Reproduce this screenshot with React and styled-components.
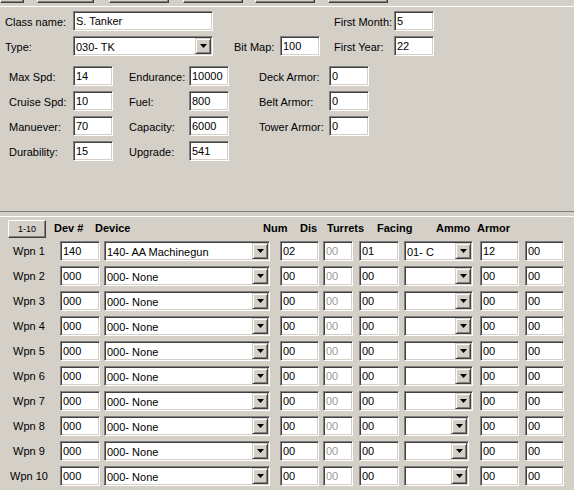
import React from 'react';
import styled, { createGlobalStyle } from 'styled-components';

const Global = createGlobalStyle`
  html, body { margin: 0; padding: 0; background: #d4d0c8; }
  body {
    font-family: "Liberation Sans", Arial, sans-serif;
    font-size: 11px;
    color: #000;
    overflow: hidden;
  }
`;

const Window = styled.div`
  width: 574px;
  height: 490px;
  background: #d4d0c8;
  overflow: hidden;
`;

/* bottoms of the tab buttons clipped at the top edge */
const TabStrip = styled.div`
  display: flex;
  height: 3px;
`;

const TabStub = styled.div`
  width: ${p => p.$w}px;
  margin-left: ${p => p.$ml}px;
  height: 3px;
  box-sizing: border-box;
  background: #d4d0c8;
  border-bottom: 1px solid #404040;
  border-right: 1px solid #404040;
  border-left: 1px solid #ffffff;
  box-shadow: inset 0 -1px 0 #808080, inset -1px 0 0 #808080;
`;

const EtchTop = styled.div`
  margin-top: 3px;
  height: 1px;
  background: #ffffff;
`;

const TopGrid = styled.div`
  display: grid;
  grid-template-columns: 68px 161px 46px 54px 60px 40px;
  grid-auto-rows: 20px;
  row-gap: 5px;
  padding-left: 5px;
  margin-top: 4px;
`;

const StatsGrid = styled.div`
  display: grid;
  grid-template-columns: 64px 56px 60px 70px 70px 40px;
  grid-auto-rows: 20px;
  row-gap: 5px;
  padding-left: 9px;
  margin-top: 10px;
`;

const Label = styled.div`
  display: flex;
  align-items: center;
  padding-top: 1px;
  white-space: nowrap;
  grid-column: ${p => p.$col || 'auto'};
`;

const Cell = styled.div`
  grid-column: ${p => p.$col || 'auto'};
`;

const Edit = styled.div`
  box-sizing: border-box;
  width: ${p => p.$w}px;
  height: 20px;
  background: #fff;
  border-top: 1px solid #808080;
  border-left: 1px solid #808080;
  border-bottom: 1px solid #ffffff;
  border-right: 1px solid #ffffff;
  box-shadow: inset 1px 1px 0 #404040, inset -1px -1px 0 #d4d0c8;
  padding: 2px 2px 0 2px;
  line-height: 14px;
  font-size: 11px;
  color: ${p => (p.$disabled ? '#999999' : '#000')};
  white-space: nowrap;
  overflow: hidden;
`;

const ComboBox = styled.div`
  box-sizing: border-box;
  width: ${p => p.$w}px;
  height: 20px;
  background: #fff;
  border-top: 1px solid #808080;
  border-left: 1px solid #808080;
  border-bottom: 1px solid #ffffff;
  border-right: 1px solid #ffffff;
  box-shadow: inset 1px 1px 0 #404040, inset -1px -1px 0 #d4d0c8;
  padding: 1px;
  display: flex;
  align-items: stretch;
`;

const ComboText = styled.div`
  flex: 1;
  padding: 2px 0 0 1px;
  line-height: 14px;
  font-size: 11px;
  white-space: nowrap;
  overflow: hidden;
`;

const DropButton = styled.div`
  box-sizing: border-box;
  width: 16px;
  height: 16px;
  background: #d4d0c8;
  border-top: 1px solid #d4d0c8;
  border-left: 1px solid #d4d0c8;
  border-bottom: 1px solid #404040;
  border-right: 1px solid #404040;
  box-shadow: inset 1px 1px 0 #ffffff, inset -1px -1px 0 #808080;
  display: flex;
  align-items: center;
  justify-content: center;
`;

const Arrow = () => (
  <svg width="7" height="4" viewBox="0 0 7 4">
    <path d="M0 0h7L3.5 4z" fill="#000" />
  </svg>
);

const Combo = ({ w, text }) => (
  <ComboBox $w={w}>
    <ComboText>{text}</ComboText>
    <DropButton>
      <Arrow />
    </DropButton>
  </ComboBox>
);

const DividerDark = styled.div`
  margin-top: 50px;
  height: 1px;
  background: #808080;
`;

const DividerLight = styled.div`
  margin-top: 4px;
  height: 1px;
  background: #ffffff;
`;

const HeaderRow = styled.div`
  display: grid;
  grid-template-columns: 46px 41px 168px 37px 27px 50px 59px 41px 60px;
  align-items: center;
  height: 18px;
  padding-left: 8px;
  margin-top: 3px;
`;

const Heading = styled.div`
  font-weight: bold;
  font-size: 11px;
  white-space: nowrap;
  padding-bottom: 2px;
`;

const SmallButton = styled.div`
  box-sizing: border-box;
  width: 38px;
  height: 18px;
  background: #d4d0c8;
  border-top: 1px solid #ffffff;
  border-left: 1px solid #ffffff;
  border-bottom: 1px solid #404040;
  border-right: 1px solid #404040;
  box-shadow: inset -1px -1px 0 #808080;
  display: flex;
  align-items: center;
  justify-content: center;
  font-size: 9px;
`;

const WeaponList = styled.div`
  display: grid;
  grid-auto-rows: 20px;
  row-gap: 5px;
  margin-top: 3px;
`;

const WeaponRow = styled.div`
  display: grid;
  grid-template-columns: 60px 44px 176px 43px 36px 45px 76px 45px 49px;
  height: 20px;
`;

const WpnLabel = styled.div`
  width: 58px;
  text-align: center;
  font-size: 11px;
  line-height: 20px;
`;

const weapons = [
  { dev: '140', device: '140- AA Machinegun', num: '02', tur: '01', facing: '01- C', ammo: '12', fw: 69 },
  ...Array.from({ length: 6 }, () => ({ dev: '000', device: '000- None', num: '00', tur: '00', facing: '', ammo: '00', fw: 69 })),
  ...Array.from({ length: 3 }, () => ({ dev: '000', device: '000- None', num: '00', tur: '00', facing: '', ammo: '00', fw: 65 })),
];

const tabs = [
  { w: 24, ml: 0 },
  { w: 57, ml: 13 },
  { w: 60, ml: 15 },
  { w: 60, ml: 14 },
  { w: 60, ml: 12 },
  { w: 60, ml: 13 },
];

export default function App() {
  return (
    <Window>
      <Global />
      <TabStrip>
        {tabs.map((t, i) => (
          <TabStub key={i} $w={t.w} $ml={t.ml} />
        ))}
      </TabStrip>
      <EtchTop />

      <TopGrid>
        <Label>Class name:</Label>
        <Cell><Edit $w={140}>S. Tanker</Edit></Cell>
        <Label $col="5">First Month:</Label>
        <Cell><Edit $w={40}>5</Edit></Cell>

        <Label>Type:</Label>
        <Cell><Combo w={140} text="030- TK" /></Cell>
        <Label>Bit Map:</Label>
        <Cell><Edit $w={40}>100</Edit></Cell>
        <Label>First Year:</Label>
        <Cell><Edit $w={40}>22</Edit></Cell>
      </TopGrid>

      <StatsGrid>
        <Label>Max Spd:</Label>
        <Cell><Edit $w={40}>14</Edit></Cell>
        <Label>Endurance:</Label>
        <Cell><Edit $w={40}>10000</Edit></Cell>
        <Label>Deck Armor:</Label>
        <Cell><Edit $w={40}>0</Edit></Cell>

        <Label>Cruise Spd:</Label>
        <Cell><Edit $w={40}>10</Edit></Cell>
        <Label>Fuel:</Label>
        <Cell><Edit $w={40}>800</Edit></Cell>
        <Label>Belt Armor:</Label>
        <Cell><Edit $w={40}>0</Edit></Cell>

        <Label>Manuever:</Label>
        <Cell><Edit $w={40}>70</Edit></Cell>
        <Label>Capacity:</Label>
        <Cell><Edit $w={40}>6000</Edit></Cell>
        <Label>Tower Armor:</Label>
        <Cell><Edit $w={40}>0</Edit></Cell>

        <Label>Durability:</Label>
        <Cell><Edit $w={40}>15</Edit></Cell>
        <Label>Upgrade:</Label>
        <Cell><Edit $w={40}>541</Edit></Cell>
      </StatsGrid>

      <DividerDark />
      <DividerLight />

      <HeaderRow>
        <SmallButton>1-10</SmallButton>
        <Heading>Dev #</Heading>
        <Heading>Device</Heading>
        <Heading>Num</Heading>
        <Heading>Dis</Heading>
        <Heading>Turrets</Heading>
        <Heading>Facing</Heading>
        <Heading>Ammo</Heading>
        <Heading>Armor</Heading>
      </HeaderRow>

      <WeaponList>
        {weapons.map((w, i) => (
          <WeaponRow key={i}>
            <WpnLabel>Wpn {i + 1}</WpnLabel>
            <Edit $w={40}>{w.dev}</Edit>
            <Combo w={166} text={w.device} />
            <Edit $w={39}>{w.num}</Edit>
            <Edit $w={30} $disabled>00</Edit>
            <Edit $w={40}>{w.tur}</Edit>
            <Combo w={w.fw} text={w.facing} />
            <Edit $w={39}>{w.ammo}</Edit>
            <Edit $w={39}>00</Edit>
          </WeaponRow>
        ))}
      </WeaponList>
    </Window>
  );
}
